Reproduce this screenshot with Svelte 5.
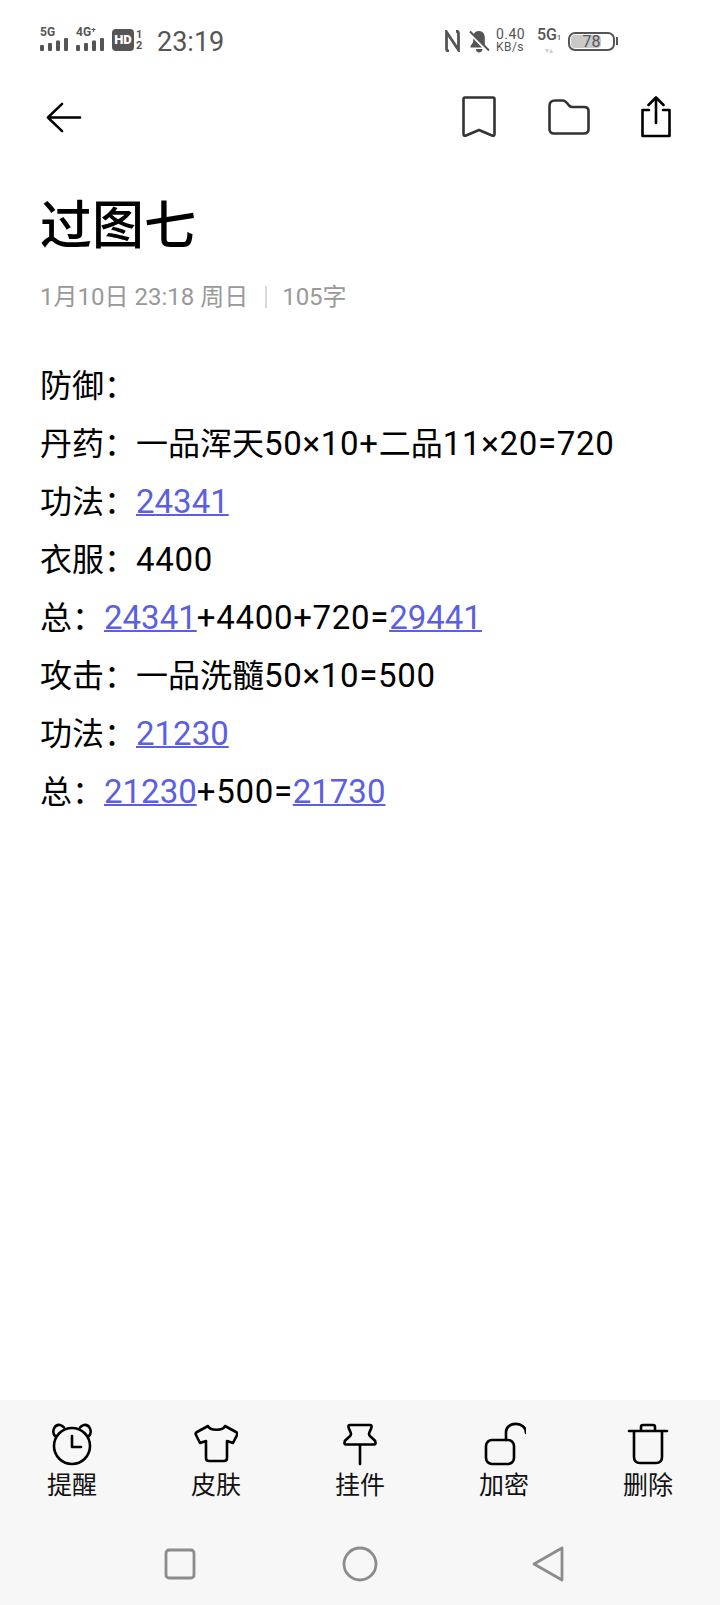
<script lang="ts">
    type Run = { t: string; link?: boolean; num?: boolean };

    const lines: Run[][] = [
        [{ t: '防御:' }],
        [{ t: '丹药:一品浑天' }, { t: '50×10+', num: true }, { t: '二品' }, { t: '11×20=720', num: true }],
        [{ t: '功法:' }, { t: '24341', link: true }],
        [{ t: '衣服:' }, { t: '4400', num: true }],
        [{ t: '总:' }, { t: '24341', link: true }, { t: '+4400+720=', num: true }, { t: '29441', link: true }],
        [{ t: '攻击:一品洗髓' }, { t: '50×10=500', num: true }],
        [{ t: '功法:' }, { t: '21230', link: true }],
        [{ t: '总:' }, { t: '21230', link: true }, { t: '+500=', num: true }, { t: '21730', link: true }]
    ].map((line: Run[]) => line.map((r) => ({ ...r, t: r.num || r.link ? r.t : r.t.replace(':', '\uFF1A') })));

    const tabs = ['提醒', '皮肤', '挂件', '加密', '删除'];
</script>

<div class="page">
    <div class="status">
        <div class="status-left">
            <div class="sig">
                <span class="sig-label">5G</span>
                <svg width="29" height="13" viewBox="0 0 29 13" fill="#555">
                    <rect x="0" y="7" width="4" height="6" rx="1" /><rect x="8" y="5" width="4" height="8" rx="1" />
                    <rect x="16" y="2.500" width="4" height="10.500" rx="1" /><rect x="24" y="0" width="4" height="13" rx="1" />
                </svg>
            </div>
            <div class="sig sig-2">
                <span class="sig-label">4G⁺</span>
                <svg width="29" height="13" viewBox="0 0 29 13" fill="#555">
                    <rect x="0" y="7" width="4" height="6" rx="1" /><rect x="8" y="5" width="4" height="8" rx="1" />
                    <rect x="16" y="2.500" width="4" height="10.500" rx="1" /><rect x="24" y="0" width="4" height="13" rx="1" />
                </svg>
            </div>
            <span class="hd">HD</span>
            <span class="hd-nums"><span>1</span><span>2</span></span>
            <span class="clock">23:19</span>
        </div>
        <div class="status-right">
            <svg class="nfc" width="15" height="22" viewBox="0 0 15 22" fill="none" stroke="#555" stroke-width="2.800">
                <path d="M4 21 C1.500 21 1.500 20 1.500 18 V2 L13.500 20 V4 C13.500 2 13 1 11 1" />
            </svg>
            <svg class="bell" width="21" height="23" viewBox="0 0 21 23" fill="#555">
                <path d="M10 1 C6.500 1 5 3 4.600 5 L15.800 16 V8 C15.800 4 14 1 10 1 Z" />
                <path d="M4.200 8.500 V12 L1.500 16 V17.500 H13 Z" />
                <path d="M7 19 H13.500 C13.500 21 12 22.500 10 22.500 C8 22.500 7 21 7 19 Z" />
                <path d="M1 1.500 L20 20.500" stroke="#555" stroke-width="2" />
            </svg>
            <div class="speed"><span>0.40</span><span class="unit">KB/s</span></div>
            <div class="net"><span class="net-label">5G<small>1</small></span><span class="net-arrows">▾▴</span></div>
            <div class="battery">
                <div class="battery-fill"></div>
                <span>78</span>
            </div>
            <span class="battery-tip"></span>
        </div>
    </div>

    <div class="toolbar">
        <svg width="36" height="31" viewBox="0 0 38 32" fill="none" stroke="#000" stroke-width="2.600" stroke-linecap="round" stroke-linejoin="round">
            <path d="M17 1.500 L2 16 L17 30.500 M2 16 H36" />
        </svg>
        <div class="toolbar-right">
            <svg class="i-mark" width="34" height="42" viewBox="0 0 34 42" fill="none" stroke="#333" stroke-width="2.600" stroke-linejoin="round">
                <path d="M3 1.500 H31 Q32.500 1.500 32.500 3 V38 Q32.500 40.500 30 39.500 L17 34 L4 39.500 Q1.500 40.500 1.500 38 V3 Q1.500 1.500 3 1.500 Z" />
            </svg>
            <svg class="i-folder" width="42" height="36" viewBox="0 0 42 36" fill="none" stroke="#333" stroke-width="2.600" stroke-linejoin="round">
                <path d="M1.500 7 Q1.500 1.500 7 1.500 H15 Q17 1.500 19 4 L21 6.500 Q22.500 8 24 8 H36 Q40.500 8 40.500 12 V30 Q40.500 34.500 36 34.500 H6 Q1.500 34.500 1.500 30 Z" />
            </svg>
            <svg class="i-share" width="30" height="42" viewBox="0 0 30 42" fill="none" stroke="#000" stroke-width="2.600" stroke-linecap="round" stroke-linejoin="round">
                <path d="M8 14 H1.500 V40 H28.500 V14 H22 M15 27 V2 M7.500 9 L15 1.500 L22.500 9" />
            </svg>
        </div>
    </div>

    <h1>过图七</h1>
    <div class="meta"><span>1月10日 23:18 周日</span><i></i><span>105字</span></div>

    <div class="body">
        {#each lines as line}
            <div class="line">
                {#each line as r}{#if r.link}<span class="link">{r.t}</span>{:else if r.num}<span class="num">{r.t}</span>{:else}{r.t}{/if}{/each}
            </div>
        {/each}
    </div>

    <div class="bottom">
        <div class="tabs">
            {#each tabs as label, i}
                <div class="tab">
                    <svg width="44" height="44" viewBox="0 0 44 44" fill="none" stroke="#000" stroke-width="2.600" stroke-linecap="round" stroke-linejoin="round">
                        {#if i === 0}
                            <circle cx="22" cy="24" r="18" />
                            <path d="M22 14 V25 H31" />
                            <path d="M5 14 C1 9 5 2 10 3 C12 3.500 13 4 14 5.500 M39 14 C43 9 39 2 34 3 C32 3.500 31 4 30 5.500" />
                        {:else if i === 1}
                            <path d="M14 4 L3 10 Q1 11 2 13 L6 21 L12 19 V36 Q12 39 15 39 H30 Q33 39 33 36 V19 L39 21 L43 13 Q44 11 42 10 L31 4 C29 9 16 9 14 4 Z" />
                        {:else if i === 2}
                            <path d="M12 3 H32 Q34 3 33.500 5 C33 8 31 10 31 12 C31 15 37 17 37.500 20 Q38 22.500 36 22.500 H8 Q6 22.500 6.500 20 C7 17 13 15 13 12 C13 10 11 8 10.500 5 Q10 3 12 3 Z M22 22.500 V42" />
                        {:else if i === 3}
                            <rect x="4" y="18" width="28" height="24" rx="6" />
                            <path d="M24 18 V10 C24 -1 44 -1 44 11" />
                        {:else}
                            <path d="M3 9 H41 M8 9 V35 Q8 41 14 41 H30 Q36 41 36 35 V9 M15 9 V5 Q15 3 17 3 H27 Q29 3 29 5 V9" />
                        {/if}
                    </svg>
                    <span>{label}</span>
                </div>
            {/each}
        </div>
        <div class="nav">
            <svg width="32" height="32" viewBox="0 0 32 32" fill="none" stroke="#8c8c8c" stroke-width="2.800"><rect x="2" y="2" width="28" height="28" rx="3" /></svg>
            <svg class="nav-home" width="36" height="36" viewBox="0 0 36 36" fill="none" stroke="#8c8c8c" stroke-width="2.800"><circle cx="18" cy="18" r="16" /></svg>
            <svg class="nav-back" width="32" height="36" viewBox="0 0 32 36" fill="none" stroke="#8c8c8c" stroke-width="2.800" stroke-linejoin="round"><path d="M30 2 V34 L2 18 Z" /></svg>
        </div>
    </div>
</div>

<style>
    :global(body) {
        margin: 0;
        background: #fff;
    }
    .page {
        width: 720px;
        height: 1605px;
        display: flex;
        flex-direction: column;
        font-family: Roboto, "Noto Sans CJK SC", sans-serif;
        color: #000;
        overflow: hidden;
    }

    .status {
        height: 80px;
        padding: 0 40px;
        display: flex;
        justify-content: space-between;
        align-items: center;
        color: #555;
    }
    .status-left, .status-right {
        display: flex;
        align-items: center;
    }
    .sig {
        display: flex;
        flex-direction: column;
        gap: 0;
        width: 29px;
        margin-bottom: 2px;
    }
    .sig-2 { margin-left: 7px; }
    .sig-label {
        font-size: 12px;
        line-height: 11px;
        font-weight: 700;
    }
    .hd {
        margin-left: 7px;
        width: 22px;
        height: 22px;
        border-radius: 4px;
        background: #555;
        color: #fff;
        font-size: 13px;
        font-weight: 900;
        text-align: center;
        line-height: 22px;
    }
    .hd-nums {
        display: flex;
        flex-direction: column;
        margin-left: 2px;
        width: 10px;
        font-size: 11px;
        line-height: 11px;
        font-weight: 700;
    }
    .clock {
        margin: 4px 0 0 11px;
        font-size: 27px;
    }
    .status-right {
        margin-right: 62px;
        padding-top: 2px;
    }
    .bell { margin-left: 9px; }
    .speed {
        margin-left: 6px;
        display: flex;
        flex-direction: column;
        font-size: 14px;
        line-height: 13px;
        letter-spacing: 0.4px;
    }
    .speed .unit { font-size: 12px; }
    .net {
        margin-left: 12px;
        display: flex;
        flex-direction: column;
        align-items: center;
        width: 24px;
    }
    .net-label {
        font-size: 16px;
        line-height: 16px;
        font-weight: 500;
        white-space: nowrap;
    }
    .net-label small { font-size: 7px; }
    .net-arrows {
        font-size: 8px;
        line-height: 9px;
        color: #ccc;
    }
    .battery {
        position: relative;
        margin-left: 7px;
        width: 43px;
        height: 15px;
        border: 2px solid #555;
        border-radius: 7px;
        text-align: center;
        overflow: hidden;
        font-size: 16px;
        line-height: 15px;
        background: #fff;
    }
    .battery span { position: relative; }
    .battery-fill {
        position: absolute;
        left: 1px;
        top: 1px;
        bottom: 1px;
        width: 30px;
        border-radius: 4px;
        background: #c9c9c9;
    }
    .battery-tip {
        width: 2px;
        height: 8px;
        margin-left: 1px;
        background: #555;
    }

    .toolbar {
        height: 74px;
        padding: 0 49px 0 46px;
        display: flex;
        justify-content: space-between;
        align-items: center;
    }
    .toolbar-right {
        display: flex;
        align-items: center;
    }
    .i-folder { margin-left: 52px; }
    .i-share { margin-left: 51px; }

    h1 {
        margin: 38px 0 0 40px;
        font-size: 52px;
        line-height: 70px;
        font-weight: 500;
    }
    .meta {
        margin: 18px 0 0 40px;
        display: flex;
        align-items: center;
        font-size: 24px;
        line-height: 34px;
        color: #999;
    }
    .meta i {
        width: 2px;
        height: 22px;
        margin: 0 15px 0 17px;
        background: #d8d8d8;
    }
    .body {
        margin: 43px 0 0 40px;
        flex: 1;
        font-size: 32px;
        line-height: 58px;
    }
    .num, .link { font-size: 33px; }
    .num { letter-spacing: 0.7px; }
    .link {
        color: #5b5fe0;
        text-decoration: underline;
        text-decoration-thickness: 2px;
    }

    .bottom {
        background: #f7f7f7;
    }
    .tabs {
        display: grid;
        grid-template-columns: repeat(5, 144px);
        padding-top: 22px;
    }
    .tab {
        display: flex;
        flex-direction: column;
        align-items: center;
        font-size: 25px;
        line-height: 36px;
        color: #111;
        gap: 2px;
    }
    .nav {
        height: 83px;
        padding: 18px 0 0 164px;
        display: flex;
        align-items: center;
    }
    .nav-home { margin-left: 146px; }
    .nav-back { margin-left: 154px; }
</style>
